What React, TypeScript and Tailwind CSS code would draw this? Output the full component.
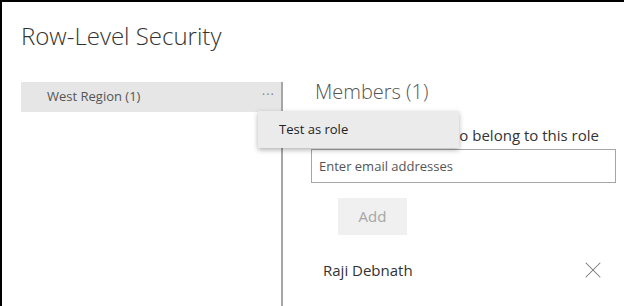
import { X } from 'lucide-react';

const App = () => {
  return (
    <div className="h-[306px] w-[630px] overflow-hidden bg-white font-['Open_Sans',sans-serif]">
      <div className="flex h-full w-[624px] flex-col border-l-2 border-t-2 border-black">
        <h1 className="pl-[19px] pt-[18px] text-[24px] font-light leading-[32px] text-[#333]">Row-Level Security</h1>

        <div className="mt-[30px] flex flex-1">
          {/* role list */}
          <div className="ml-[19px] w-[262px] border-r-2 border-[#a6a6a6]">
            <div className="relative flex h-[30px] items-center justify-between bg-[#e6e6e6] pl-[26px] pr-[6px]">
              <span className="text-[13px] text-[#555]">West Region (1)</span>
              <span className="pb-[4px] text-[13px] tracking-[1px] text-[#888]">···</span>

              <div className="absolute left-[237px] top-[29px] z-10 flex h-[37px] w-[201px] items-center bg-[#ebebeb] pl-[21px] shadow-[0_2px_5px_rgba(0,0,0,0.3)]">
                <span className="text-[13px] text-[#222]">Test as role</span>
              </div>
            </div>
          </div>

          {/* members */}
          <div className="flex flex-1 flex-col pl-[32px]">
            <h2 className="-mt-[2px] text-[20px] font-light leading-[24px] text-[#555]">Members (1)</h2>
            <p className="mt-[21px] text-[15px] leading-[20px] text-[#333]">People or groups who belong to this role</p>
            <input
              className="-ml-[4px] mt-[4px] h-[34px] w-[305px] border border-[#a6a6a6] px-[7px] text-[13px] text-[#333] outline-none placeholder:text-[#555]"
              placeholder="Enter email addresses"
            />
            <button className="ml-[23px] mt-[15px] h-[37px] w-[69px] bg-[#f0f0f0] text-[15px] text-[#a6a6a6]">Add</button>
            <div className="mt-[21px] flex items-center justify-between pl-[8px] pr-[17px]">
              <span className="text-[15px] text-[#333]">Raji Debnath</span>
              <X className="h-[28px] w-[28px] text-[#777]" strokeWidth={0.9} />
            </div>
          </div>
        </div>
      </div>
    </div>
  );
};

export default App;
